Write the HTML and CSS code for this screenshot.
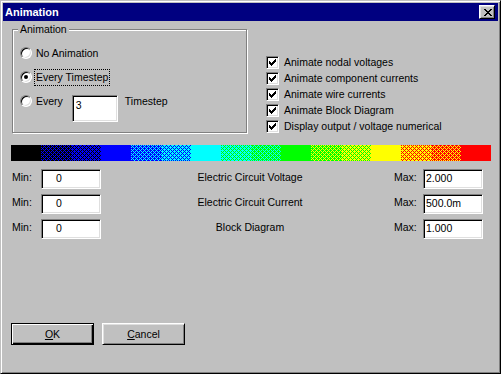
FILE: index.html
```html
<!DOCTYPE html>
<html>
<head>
  <title>Animation</title>
  <link rel="stylesheet" href="styles.css">
</head>
<body>
<div class="window">
  <div class="titlebar">
    <span class="title">Animation</span>
    <span class="close-btn">
      <svg width="8" height="7" viewBox="0 0 8 7" shape-rendering="crispEdges"><path d="M0 0h2v1H0z M6 0h2v1H6z M1 1h2v1H1z M5 1h2v1H5z M2 2h4v1H2z M3 3h2v1H3z M2 4h4v1H2z M1 5h2v1H1z M5 5h2v1H5z M0 6h2v1H0z M6 6h2v1H6z" fill="#000"/></svg>
    </span>
  </div>

  <div class="dialog">
    <div class="top-row">
      <div class="group">
        <div class="group-title">Animation</div>
        <div class="radio-row">
          <span class="radio"></span>
          <span class="label">No Animation</span>
        </div>
        <div class="radio-row">
          <span class="radio checked"></span>
          <span class="label focused">Every Timestep</span>
        </div>
        <div class="radio-row">
          <span class="radio"></span>
          <span class="label">Every</span>
          <span class="field step-field">3</span>
          <span class="label">Timestep</span>
        </div>
      </div>

      <div class="checks">
        <div class="check-row"><span class="checkbox"><svg width="7" height="7" viewBox="0 0 7 7" shape-rendering="crispEdges"><path d="M6 0h1v1H6z M5 1h2v1H5z M0 2h1v1H0z M4 2h3v1H4z M0 3h2v1H0z M3 3h3v1H3z M0 4h5v1H0z M1 5h3v1H1z M2 6h1v1H2z" fill="#000"/></svg></span>Animate nodal voltages</div>
        <div class="check-row"><span class="checkbox"><svg width="7" height="7" viewBox="0 0 7 7" shape-rendering="crispEdges"><path d="M6 0h1v1H6z M5 1h2v1H5z M0 2h1v1H0z M4 2h3v1H4z M0 3h2v1H0z M3 3h3v1H3z M0 4h5v1H0z M1 5h3v1H1z M2 6h1v1H2z" fill="#000"/></svg></span>Animate component currents</div>
        <div class="check-row"><span class="checkbox"><svg width="7" height="7" viewBox="0 0 7 7" shape-rendering="crispEdges"><path d="M6 0h1v1H6z M5 1h2v1H5z M0 2h1v1H0z M4 2h3v1H4z M0 3h2v1H0z M3 3h3v1H3z M0 4h5v1H0z M1 5h3v1H1z M2 6h1v1H2z" fill="#000"/></svg></span>Animate wire currents</div>
        <div class="check-row"><span class="checkbox"><svg width="7" height="7" viewBox="0 0 7 7" shape-rendering="crispEdges"><path d="M6 0h1v1H6z M5 1h2v1H5z M0 2h1v1H0z M4 2h3v1H4z M0 3h2v1H0z M3 3h3v1H3z M0 4h5v1H0z M1 5h3v1H1z M2 6h1v1H2z" fill="#000"/></svg></span>Animate Block Diagram</div>
        <div class="check-row"><span class="checkbox"><svg width="7" height="7" viewBox="0 0 7 7" shape-rendering="crispEdges"><path d="M6 0h1v1H6z M5 1h2v1H5z M0 2h1v1H0z M4 2h3v1H4z M0 3h2v1H0z M3 3h3v1H3z M0 4h5v1H0z M1 5h3v1H1z M2 6h1v1H2z" fill="#000"/></svg></span>Display output / voltage numerical</div>
      </div>
    </div>

    <svg class="color-bar" width="480" height="16" viewBox="0 0 480 16" shape-rendering="crispEdges">
      <defs>
        <!-- 4x4 ordered dither: "lo" = 6/16 of the second colour, "hi" = 10/16 -->
        <pattern id="lo-black-blue" width="4" height="4" patternUnits="userSpaceOnUse"><rect width="4" height="4" fill="#000"/><path d="M0 0h1v1H0z M2 0h1v1H2z M1 1h1v1H1z M0 2h1v1H0z M2 2h1v1H2z M3 3h1v1H3z" fill="#00f"/></pattern>
        <pattern id="hi-black-blue" width="4" height="4" patternUnits="userSpaceOnUse"><rect width="4" height="4" fill="#00f"/><path d="M3 0h1v1H3z M0 1h1v1H0z M2 1h1v1H2z M1 2h1v1H1z M0 3h1v1H0z M2 3h1v1H2z" fill="#000"/></pattern>
        <pattern id="lo-blue-cyan" width="4" height="4" patternUnits="userSpaceOnUse"><rect width="4" height="4" fill="#00f"/><path d="M0 0h1v1H0z M2 0h1v1H2z M1 1h1v1H1z M0 2h1v1H0z M2 2h1v1H2z M3 3h1v1H3z" fill="#0ff"/></pattern>
        <pattern id="hi-blue-cyan" width="4" height="4" patternUnits="userSpaceOnUse"><rect width="4" height="4" fill="#0ff"/><path d="M3 0h1v1H3z M0 1h1v1H0z M2 1h1v1H2z M1 2h1v1H1z M0 3h1v1H0z M2 3h1v1H2z" fill="#00f"/></pattern>
        <pattern id="lo-cyan-green" width="4" height="4" patternUnits="userSpaceOnUse"><rect width="4" height="4" fill="#0ff"/><path d="M0 0h1v1H0z M2 0h1v1H2z M1 1h1v1H1z M0 2h1v1H0z M2 2h1v1H2z M3 3h1v1H3z" fill="#0f0"/></pattern>
        <pattern id="hi-cyan-green" width="4" height="4" patternUnits="userSpaceOnUse"><rect width="4" height="4" fill="#0f0"/><path d="M3 0h1v1H3z M0 1h1v1H0z M2 1h1v1H2z M1 2h1v1H1z M0 3h1v1H0z M2 3h1v1H2z" fill="#0ff"/></pattern>
        <pattern id="lo-green-yellow" width="4" height="4" patternUnits="userSpaceOnUse"><rect width="4" height="4" fill="#0f0"/><path d="M0 0h1v1H0z M2 0h1v1H2z M1 1h1v1H1z M0 2h1v1H0z M2 2h1v1H2z M3 3h1v1H3z" fill="#ff0"/></pattern>
        <pattern id="hi-green-yellow" width="4" height="4" patternUnits="userSpaceOnUse"><rect width="4" height="4" fill="#ff0"/><path d="M3 0h1v1H3z M0 1h1v1H0z M2 1h1v1H2z M1 2h1v1H1z M0 3h1v1H0z M2 3h1v1H2z" fill="#0f0"/></pattern>
        <pattern id="lo-yellow-red" width="4" height="4" patternUnits="userSpaceOnUse"><rect width="4" height="4" fill="#ff0"/><path d="M0 0h1v1H0z M2 0h1v1H2z M1 1h1v1H1z M0 2h1v1H0z M2 2h1v1H2z M3 3h1v1H3z" fill="#f00"/></pattern>
        <pattern id="hi-yellow-red" width="4" height="4" patternUnits="userSpaceOnUse"><rect width="4" height="4" fill="#f00"/><path d="M3 0h1v1H3z M0 1h1v1H0z M2 1h1v1H2z M1 2h1v1H1z M0 3h1v1H0z M2 3h1v1H2z" fill="#ff0"/></pattern>
      </defs>
      <rect x="0" width="30" height="16" fill="#000"/>
      <rect x="30" width="30" height="16" fill="url(#lo-black-blue)"/>
      <rect x="60" width="30" height="16" fill="url(#hi-black-blue)"/>
      <rect x="90" width="30" height="16" fill="#00f"/>
      <rect x="120" width="30" height="16" fill="url(#lo-blue-cyan)"/>
      <rect x="150" width="30" height="16" fill="url(#hi-blue-cyan)"/>
      <rect x="180" width="30" height="16" fill="#0ff"/>
      <rect x="210" width="30" height="16" fill="url(#lo-cyan-green)"/>
      <rect x="240" width="30" height="16" fill="url(#hi-cyan-green)"/>
      <rect x="270" width="30" height="16" fill="#0f0"/>
      <rect x="300" width="30" height="16" fill="url(#lo-green-yellow)"/>
      <rect x="330" width="30" height="16" fill="url(#hi-green-yellow)"/>
      <rect x="360" width="30" height="16" fill="#ff0"/>
      <rect x="390" width="30" height="16" fill="url(#lo-yellow-red)"/>
      <rect x="420" width="30" height="16" fill="url(#hi-yellow-red)"/>
      <rect x="450" width="30" height="16" fill="#f00"/>
    </svg>

    <div class="ranges">
      <div class="range-row">
        <span class="range-label">Min:</span>
        <span class="field min-field">0</span>
        <span class="range-name">Electric Circuit Voltage</span>
        <span class="range-label">Max:</span>
        <span class="field max-field">2.000</span>
      </div>
      <div class="range-row">
        <span class="range-label">Min:</span>
        <span class="field min-field">0</span>
        <span class="range-name">Electric Circuit Current</span>
        <span class="range-label">Max:</span>
        <span class="field max-field">500.0m</span>
      </div>
      <div class="range-row">
        <span class="range-label">Min:</span>
        <span class="field min-field">0</span>
        <span class="range-name">Block Diagram</span>
        <span class="range-label">Max:</span>
        <span class="field max-field">1.000</span>
      </div>
    </div>

    <div class="buttons">
      <span class="button default"><u>O</u>K</span>
      <span class="button"><u>C</u>ancel</span>
    </div>
  </div>
</div>
</body>
</html>
```

FILE: styles.css
```css
body { margin: 0; font-family: "Liberation Sans", Arial, sans-serif; font-size: 10.5px; line-height: 13px; color: #000; }

.window { width: 501px; height: 374px; box-sizing: border-box; background: #c0c0c0; border: 1px solid; border-color: #c0c0c0 #000 #000 #c0c0c0; box-shadow: inset 1px 1px #fff, inset -1px -1px #808080; padding: 2px; display: flex; flex-direction: column; }

.titlebar { height: 18px; background: #000080; color: #fff; display: flex; align-items: center; justify-content: space-between; padding-left: 2px; }
.title { font-weight: bold; font-size: 11px; }
.close-btn { width: 16px; height: 14px; box-sizing: border-box; margin-right: 3px; background: #c0c0c0; border: 1px solid; border-color: #fff #000 #000 #fff; box-shadow: inset 1px 1px #dfdfdf, inset -1px -1px #808080; padding: 3px 0 0 4px; }
.close-btn svg { display: block; }

.dialog { flex: 1; display: flex; flex-direction: column; padding: 8px 0 26px 8px; }

.top-row { display: flex; align-items: flex-start; }

/* etched group box */
.group { width: 235px; height: 104px; box-sizing: border-box; margin-left: 1px; border: 1px solid #808080; box-shadow: inset 1px 1px #fff, 1px 1px #fff; }
.group-title { margin: -7px 0 0 5px; padding: 0 2px; width: fit-content; background: #c0c0c0; }

.radio-row { height: 24px; display: flex; align-items: center; }
.group-title + .radio-row { margin-top: 5px; }
.radio { width: 12px; height: 12px; box-sizing: border-box; margin: 0 2px 0 7px; border-radius: 50%; background: #fff; border: 1px solid; border-color: #808080 #fff #fff #808080; box-shadow: inset 1px 1px #000, inset -1px -1px #dfdfdf; display: flex; align-items: center; justify-content: center; }
.radio.checked::after { content: ""; width: 4px; height: 4px; border-radius: 50%; background: #000; }
.label { padding: 1px; border: 1px solid transparent; }
.label.focused { border: 1px dotted #000; }

.field { box-sizing: border-box; background: #fff; border: 1px solid; border-color: #808080 #fff #fff #808080; box-shadow: inset 1px 1px #000, inset -1px -1px #dfdfdf; }
.step-field { align-self: flex-start; width: 46px; height: 27px; margin: 6px 5px 0 7px; padding: 3px 0 0 3px; }

.checks { margin: 25px 0 0 19px; }
.check-row { height: 16px; display: flex; align-items: center; }
.checkbox { width: 13px; height: 13px; box-sizing: border-box; margin-right: 5px; background: #fff; border: 1px solid; border-color: #808080 #fff #fff #808080; box-shadow: inset 1px 1px #000, inset -1px -1px #dfdfdf; display: flex; align-items: center; justify-content: center; }
.checkbox svg { display: block; }

.color-bar { display: block; margin-top: 11px; }

.ranges { width: 472px; margin-top: 8px; display: flex; flex-direction: column; gap: 5px; }
.range-row { display: grid; grid-template-columns: 30px 60px 1fr 30px 60px; height: 20px; align-items: start; }
.range-label { line-height: 16px; padding-left: 1px; }
.range-name { line-height: 16px; text-align: center; padding-left: 6px; }
.range-row .field { height: 20px; line-height: 16px; }
.min-field { padding-left: 14px; }
.max-field { padding-left: 2px; }

.buttons { margin-top: auto; display: flex; gap: 8px; }
.button { width: 83px; height: 22px; box-sizing: border-box; display: flex; align-items: center; justify-content: center; border: 1px solid; border-color: #fff #000 #000 #fff; box-shadow: inset 1px 1px #dfdfdf, inset -1px -1px #808080; }
.button.default { border-color: #000; box-shadow: inset 1px 1px #fff, inset -1px -1px #000, inset -2px -2px #808080; }
.button u { text-decoration-thickness: 1px; text-underline-offset: 1px; }
```
